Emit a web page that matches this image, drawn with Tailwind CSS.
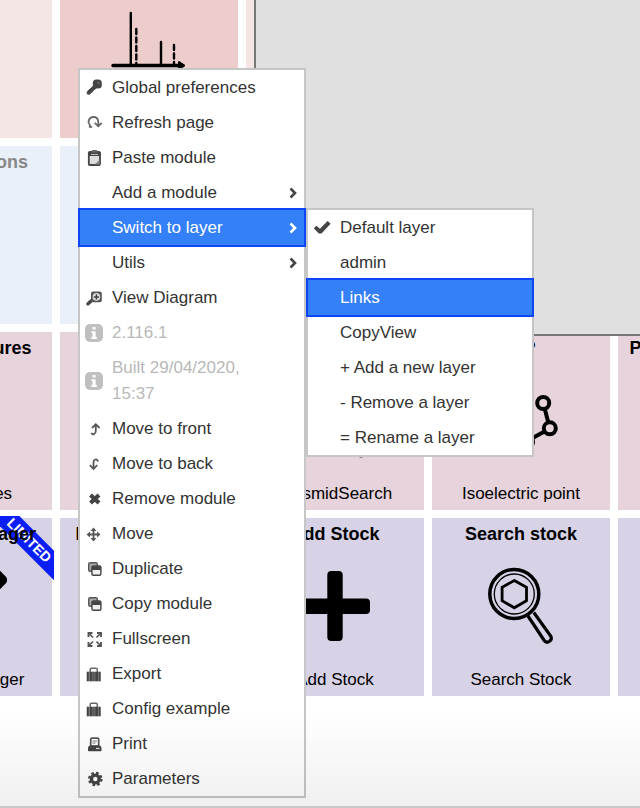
<!DOCTYPE html>
<html lang="en">
<head>
<meta charset="utf-8">
<meta name="viewport" content="width=device-width, initial-scale=1">
<title>Home</title>
<script src="https://cdn.jsdelivr.net/npm/@tailwindcss/browser@4"></script>
</head>
<body class="bg-white font-['Liberation_Sans',Arial,sans-serif] text-[17px] leading-[26px] text-black">

<svg class="hidden" aria-hidden="true">
  <symbol id="i-info" viewBox="0 0 18 18"><rect width="18" height="18" rx="5" fill="#bfbfbf"/><path d="M7.600 3h3v2.600h-3zM6.400 7.200h4.200v5.600h1.200V15H6.400v-2.200h1.300V9.300H6.400z" fill="#fff"/></symbol>
  <symbol id="i-copy" viewBox="0 0 18 18"><rect x="3.700" y="2.700" width="8.600" height="8.600" rx="1.500" fill="#aaa" stroke="#555" stroke-width="1.400"/><rect x="6.900" y="6" width="9" height="9.300" rx="1.500" fill="#eee" stroke="#444" stroke-width="1.400"/><path d="M7 6.200h8.800V10H7z" fill="#444"/></symbol>
  <symbol id="i-case" viewBox="0 0 18 18"><path d="M5.200 7V4.600q0-1.400 1.400-1.400h4.300q1.400 0 1.400 1.400V7" fill="none" stroke="#666" stroke-width="1.500"/><path d="M1.800 6.800H15.600v9.400H1.800z" fill="#999"/><path d="M1.800 6.800h2v9.400h-2zM4.600 6.800h3v9.400h-3zM8.200 6.800h1.400v9.400H8.200zM10.200 6.800h2.800v9.400h-2.800zM13.600 6.800h2v9.400h-2z" fill="#444"/></symbol>
  <symbol id="i-chevron" viewBox="0 0 8 12"><path d="M1.500 1.500 6 6l-4.500 4.500" fill="none" stroke="currentColor" stroke-width="2.600"/></symbol>
</svg>

<main class="relative min-h-screen overflow-hidden">

  <!-- Board of modules, scrolled past its top left corner -->
  <section class="-mt-10 -ml-[126px] grid grid-cols-[repeat(5,178px)] auto-rows-[178px] gap-2 text-center whitespace-nowrap">
    <a href="#" class="bg-[#f5e6e6]"></a>
    <a href="#" class="flex items-center justify-center bg-[#edcccc]">
      <svg class="size-20" viewBox="0 0 80 80" fill="none" stroke="#000" stroke-linecap="round">
        <path d="M21.800 4v52M52 33v23" stroke-width="2.400"/>
        <path d="M27.300 20v35M65 36v20" stroke-width="2.400" stroke-dasharray="5 3.500"/>
        <path d="M4 56.500h70" stroke-width="3.400"/><path d="m70 53 5 3.500-5 3.500z" fill="#000" stroke-width="2" stroke-linejoin="round"/>
      </svg>
    </a>
    <a href="#" class="bg-[#f5e6e6]"></a>
    <a href="#" class="bg-[#f5e6e6]"></a>
    <a href="#" class="bg-[#f5e6e6]"></a>

    <a href="#" class="bg-[#e9f0f8] pt-1 text-lg leading-6 font-bold text-[#888]">Mass reactions</a>
    <a href="#" class="bg-[#e9f0f8]"></a>
    <a href="#" class="bg-[#e9f0f8]"></a>
    <a href="#" class="bg-[#e9f0f8]"></a>
    <a href="#" class="bg-[#e9f0f8]"></a>

    <a href="#" class="flex flex-col items-center justify-between bg-[#e6d3db] py-1">
      <b class="text-lg leading-6">Draw structures</b><span class="leading-6">All structures</span>
    </a>
    <a href="#" class="bg-[#e6d3db]"></a>
    <a href="#" class="flex flex-col items-center justify-between bg-[#e6d3db] py-1">
      <b class="text-lg leading-6">Plasmid</b>
      <svg class="size-20" viewBox="0 0 80 80" fill="none" stroke="#000" stroke-width="3"><circle cx="36" cy="34" r="24"/><circle cx="66" cy="68" r="7"/></svg>
      <span class="leading-6">PlasmidSearch</span>
    </a>
    <a href="#" class="flex flex-col items-center justify-between bg-[#e6d3db] py-1">
      <b class="text-lg leading-6">IEP</b>
      <svg class="size-20" viewBox="0 0 80 80" fill="none" stroke="#000" stroke-width="4"><circle cx="62.200" cy="22" r="6"/><circle cx="68.800" cy="47.300" r="6"/><path d="m63.800 28 3.500 13.500M63.500 50.500 46 60"/><circle cx="46" cy="61" r="6"/></svg>
      <span class="leading-6">Isoelectric point</span>
    </a>
    <a href="#" class="flex flex-col items-center bg-[#e6d3db] py-1"><b class="text-lg leading-6">Protein properties</b></a>

    <a href="#" class="relative flex flex-col items-center justify-between bg-[#d7d2e6] py-1">
      <span class="absolute -top-0.5 -right-0.5 size-25 overflow-hidden">
        <span class="absolute top-3.5 left-[3px] w-36 rotate-45 bg-[#0a1ef5] text-sm leading-[21px] font-bold text-white">LIMITED</span>
      </span>
      <b class="relative text-lg leading-6">Storage Manager</b>
      <svg class="size-24" viewBox="0 0 96 96"><rect x="58" y="6" width="30" height="30" rx="5" transform="rotate(45 73 21)"/></svg>
      <span class="leading-6">Stocks Manager</span>
    </a>
    <a href="#" class="flex flex-col items-center bg-[#d7d2e6] py-1"><b class="text-lg leading-6">Product Manager</b></a>
    <a href="#" class="flex flex-col items-center justify-between bg-[#d7d2e6] py-1">
      <b class="text-lg leading-6">Add Stock</b>
      <svg class="size-20" viewBox="0 0 80 80"><rect x="32.300" y="4" width="15.400" height="70" rx="4"/><rect x="5" y="31.500" width="70" height="15.400" rx="4"/></svg>
      <span class="leading-6">Add Stock</span>
    </a>
    <a href="#" class="flex flex-col items-center justify-between bg-[#d7d2e6] py-1">
      <b class="text-lg leading-6">Search stock</b>
      <svg class="size-20" viewBox="0 0 80 80" fill="none" stroke="#000"><circle cx="33.300" cy="27" r="24.500" stroke-width="3.500"/><circle cx="33.300" cy="27" r="20" stroke-width="1.300"/><path d="m33.300 13.500 12.200 6.800v13.500l-12.200 7-12.200-7V20.300z" stroke-width="2.800"/><path d="m47 49 16.200 24.500q2.300 3 5.300.8t1.200-5.200L52.800 45.500" stroke-width="3.200"/></svg>
      <span class="leading-6">Search Stock</span>
    </a>
    <a href="#" class="bg-[#d7d2e6]"></a>
  </section>

  <!-- Viewer panel floating over the board -->
  <section class="absolute top-0 right-0 left-[254px] h-[336px] border-b-2 border-l-2 border-[#777] bg-[#e0e0e0]"></section>

  <!-- Context menu -->
  <ul role="menu" class="absolute top-[68px] left-[78px] w-[228px] border-2 border-[#c6c6c6] bg-white text-[#333]">
    <li role="none"><button role="menuitem" class="flex w-full items-center gap-[9px] pt-[5px] pr-[7px] pb-1 pl-[5px] text-left">
      <svg class="size-[18px] shrink-0" viewBox="0 0 18 18"><path d="M9 6.500 2.300 12.500v2.600H5l.6-1.700 1.900-.4.600-1.800 2.600-1.500z" fill="#444" stroke="#444" stroke-linejoin="round"/><rect x="7.800" y=".6" width="9" height="9" rx="3.600" fill="#444"/><path d="m12.500 3.200 2 1.600" stroke="#999"/></svg>
      <span>Global preferences</span></button></li>
    <li role="none"><button role="menuitem" class="flex w-full items-center gap-[9px] pt-[5px] pr-[7px] pb-1 pl-[5px] text-left">
      <svg class="size-[18px] shrink-0" viewBox="0 0 18 18" fill="none" stroke="#666" stroke-width="1.800"><path d="M7.200 12.800H4.800v-2Q3 9.500 3.600 7 4.700 3 8.500 3q4.500 0 4.800 5v4"/><path d="m9.800 8.800 3.500 3.500 3.400-3.500"/></svg>
      <span>Refresh page</span></button></li>
    <li role="none"><button role="menuitem" class="flex w-full items-center gap-[9px] pt-[5px] pr-[7px] pb-1 pl-[5px] text-left">
      <svg class="size-[18px] shrink-0" viewBox="0 0 18 18"><rect x="3.800" y="3" width="11.200" height="13" rx="1" fill="#ddd" stroke="#444" stroke-width="1.800"/><path d="M3.500 3h12v4h-12z" fill="#444"/><path d="M7 1h5v2.500H7z" fill="#666"/><path d="M6 5h7v1H6z" fill="#bbb"/><path d="M9.500 15.500 14.500 11v4.500z" fill="#888"/></svg>
      <span>Paste module</span></button></li>
    <li role="none"><button role="menuitem" aria-haspopup="true" class="flex w-full items-center gap-[9px] pt-[5px] pr-[7px] pb-1 pl-8 text-left">
      <span class="flex-1">Add a module</span><svg class="h-3 w-2 text-[#444]"><use href="#i-chevron"/></svg></button></li>
    <li role="none" class="relative z-10">
      <button role="menuitem" aria-haspopup="true" aria-expanded="true" class="flex w-full items-center gap-[9px] bg-[#3480f8] pt-[5px] pr-[7px] pb-1 pl-8 text-left text-white outline-2 outline-[#0d47f5]">
      <span class="flex-1">Switch to layer</span><svg class="h-3 w-2"><use href="#i-chevron"/></svg></button>
      <ul role="menu" class="absolute -top-0.5 left-full ml-0.5 w-[228px] border-2 border-[#c6c6c6] bg-white text-[#333]">
        <li role="none"><button role="menuitem" class="flex w-full items-center gap-[9px] pt-[5px] pr-[7px] pb-1 pl-[5px] text-left">
          <svg class="size-[18px] shrink-0" viewBox="0 0 18 18"><path d="m.8 9.300 2.600-2.500 3.500 3L14.600 2l3 2.700L8.500 14.600H5.800z" fill="#444"/></svg>
          <span>Default layer</span></button></li>
        <li role="none"><button role="menuitem" class="w-full pt-[5px] pr-[7px] pb-1 pl-8 text-left">admin</button></li>
        <li role="none"><button role="menuitem" class="relative w-full bg-[#3480f8] pt-[5px] pr-[7px] pb-1 pl-8 text-left text-white outline-2 outline-[#0d47f5]">Links</button></li>
        <li role="none"><button role="menuitem" class="w-full pt-[5px] pr-[7px] pb-1 pl-8 text-left">CopyView</button></li>
        <li role="none"><button role="menuitem" class="w-full pt-[5px] pr-[7px] pb-1 pl-8 text-left">+ Add a new layer</button></li>
        <li role="none"><button role="menuitem" class="w-full pt-[5px] pr-[7px] pb-1 pl-8 text-left">- Remove a layer</button></li>
        <li role="none"><button role="menuitem" class="w-full pt-[5px] pr-[7px] pb-1 pl-8 text-left">= Rename a layer</button></li>
      </ul>
    </li>
    <li role="none"><button role="menuitem" aria-haspopup="true" class="flex w-full items-center gap-[9px] pt-[5px] pr-[7px] pb-1 pl-8 text-left">
      <span class="flex-1">Utils</span><svg class="h-3 w-2 text-[#444]"><use href="#i-chevron"/></svg></button></li>
    <li role="none"><button role="menuitem" class="flex w-full items-center gap-[9px] pt-[5px] pr-[7px] pb-1 pl-[5px] text-left">
      <svg class="size-[18px] shrink-0" viewBox="0 0 18 18"><path d="m3 14.800 4.500-4" stroke="#444" stroke-width="3.400" stroke-linecap="round"/><rect x="6" y="2.500" width="10.800" height="10.800" rx="2" fill="#555"/><circle cx="11.400" cy="7.900" r="3.800" fill="#ddd"/><path d="M8.800 7.900H14M11.400 5.300v5.200" stroke="#444" stroke-width="1.500"/></svg>
      <span>View Diagram</span></button></li>
    <li role="none"><button role="menuitem" disabled class="flex w-full items-center gap-[9px] pt-[5px] pr-8 pb-1 pl-[5px] text-left text-[#b8b8b8]">
      <svg class="size-[18px] shrink-0"><use href="#i-info"/></svg><span>2.116.1</span></button></li>
    <li role="none"><button role="menuitem" disabled class="flex w-full items-center gap-[9px] pt-[5px] pr-8 pb-1 pl-[5px] text-left text-[#b8b8b8]">
      <svg class="size-[18px] shrink-0"><use href="#i-info"/></svg><span>Built 29/04/2020, 15:37</span></button></li>
    <li role="none"><button role="menuitem" class="flex w-full items-center gap-[9px] pt-[5px] pr-[7px] pb-1 pl-[5px] text-left">
      <svg class="size-[18px] shrink-0" viewBox="0 0 18 18" fill="none" stroke="#555" stroke-width="1.800"><path d="M6.300 12.800q1 2 2.700 1.300 1.800-.6 1.800-3V4.500"/><path d="m7 8 3.800-3.700L14.600 8"/></svg>
      <span>Move to front</span></button></li>
    <li role="none"><button role="menuitem" class="flex w-full items-center gap-[9px] pt-[5px] pr-[7px] pb-1 pl-[5px] text-left">
      <svg class="size-[18px] shrink-0" viewBox="0 0 18 18" fill="none" stroke="#555" stroke-width="1.800"><path d="M13.200 6.500q-1-2.500-3-2Q8.500 5 8.500 7.500v6"/><path d="m4.800 10.200 3.700 3.700 3.700-3.700"/></svg>
      <span>Move to back</span></button></li>
    <li role="none"><button role="menuitem" class="flex w-full items-center gap-[9px] pt-[5px] pr-[7px] pb-1 pl-[5px] text-left">
      <svg class="size-[18px] shrink-0" viewBox="0 0 18 18"><path d="m5.500 5 8.500 8M14 5l-8.500 8" stroke="#444" stroke-width="4.200"/></svg>
      <span>Remove module</span></button></li>
    <li role="none"><button role="menuitem" class="flex w-full items-center gap-[9px] pt-[5px] pr-[7px] pb-1 pl-[5px] text-left">
      <svg class="size-[18px] shrink-0" viewBox="0 0 18 18"><path d="M8.500 4v11M3 9.500h11" stroke="#555" stroke-width="1.800"/><path d="M8.500 2.500 11.500 6h-6zM8.500 16.500l3-3.500h-6zM1.500 9.500 5 6.500v6zM15.500 9.500 12 6.500v6z" fill="#555"/></svg>
      <span>Move</span></button></li>
    <li role="none"><button role="menuitem" class="flex w-full items-center gap-[9px] pt-[5px] pr-[7px] pb-1 pl-[5px] text-left">
      <svg class="size-[18px] shrink-0"><use href="#i-copy"/></svg><span>Duplicate</span></button></li>
    <li role="none"><button role="menuitem" class="flex w-full items-center gap-[9px] pt-[5px] pr-[7px] pb-1 pl-[5px] text-left">
      <svg class="size-[18px] shrink-0"><use href="#i-copy"/></svg><span>Copy module</span></button></li>
    <li role="none"><button role="menuitem" class="flex w-full items-center gap-[9px] pt-[5px] pr-[7px] pb-1 pl-[5px] text-left">
      <svg class="size-[18px] shrink-0" viewBox="0 0 18 18" fill="none" stroke="#555" stroke-width="1.900"><path d="M3.500 7V3h4M12 3h4v4M16 12v4h-4M7.500 16h-4v-4"/><path d="m4 3.500 4 4M15.500 3.500l-4 4M15.500 15.500l-4-4M4 15.500l4-4" stroke-width="1.700"/></svg>
      <span>Fullscreen</span></button></li>
    <li role="none"><button role="menuitem" class="flex w-full items-center gap-[9px] pt-[5px] pr-[7px] pb-1 pl-[5px] text-left">
      <svg class="size-[18px] shrink-0"><use href="#i-case"/></svg><span>Export</span></button></li>
    <li role="none"><button role="menuitem" class="flex w-full items-center gap-[9px] pt-[5px] pr-[7px] pb-1 pl-[5px] text-left">
      <svg class="size-[18px] shrink-0"><use href="#i-case"/></svg><span>Config example</span></button></li>
    <li role="none"><button role="menuitem" class="flex w-full items-center gap-[9px] pt-[5px] pr-[7px] pb-1 pl-[5px] text-left">
      <svg class="size-[18px] shrink-0" viewBox="0 0 18 18"><rect x="5.700" y="3.200" width="8" height="8" rx="1.200" fill="#fff" stroke="#555" stroke-width="1.700"/><path d="M7.500 6h4.500M7.500 8h3" stroke="#777"/><path d="M4.500 10.500H15q1.500 1 1.500 2.500v2.500q0 .8-.8.8H3.800q-.8 0-.8-.8V13q0-1.500 1.500-2.500z" fill="#444"/><path d="M11 13.500h3.500" stroke="#ddd" stroke-width="1.200"/></svg>
      <span>Print</span></button></li>
    <li role="none"><button role="menuitem" class="flex w-full items-center gap-[9px] pt-[5px] pr-[7px] pb-1 pl-[5px] text-left">
      <svg class="size-[18px] shrink-0" viewBox="0 0 18 18" fill="none" stroke="#444"><circle cx="10.300" cy="9" r="3.900" stroke-width="3.400"/><circle cx="10.300" cy="9" r="6.200" stroke-width="2.200" stroke-dasharray="2.630 2.240"/></svg>
      <span>Parameters</span></button></li>
  </ul>

  <!-- Shade along the lower edge of the window -->
  <div class="pointer-events-none absolute inset-x-0 bottom-0 z-20 h-24 border-b-2 border-[#c8c8c8] bg-linear-to-b from-transparent to-black/6"></div>
</main>
</body>
</html>
